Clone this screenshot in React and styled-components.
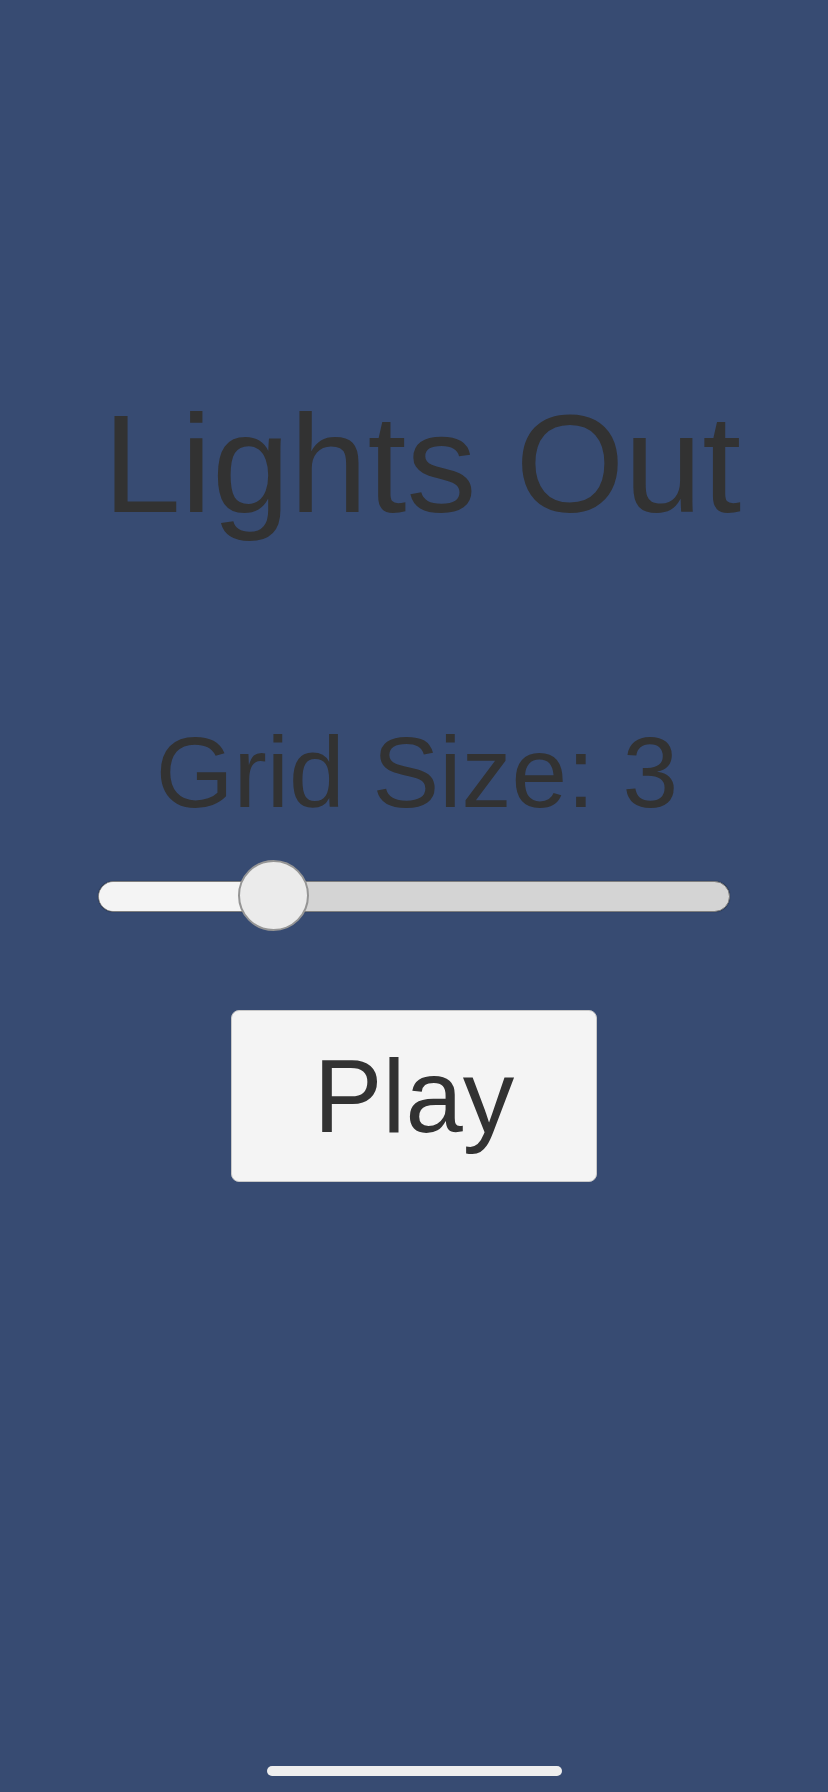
import React from "react";
import styled, { createGlobalStyle } from "styled-components";

const GlobalStyle = createGlobalStyle`
  html, body {
    margin: 0;
    padding: 0;
    background: #374b72;
  }
  * {
    box-sizing: border-box;
  }
`;

const Screen = styled.div`
  width: 828px;
  min-height: 1792px;
  background: #374b72;
  display: flex;
  flex-direction: column;
  align-items: center;
  padding-top: 394px;
  font-family: "Liberation Sans", Arial, sans-serif;
  color: #323232;
`;

const Title = styled.h1`
  margin: 0;
  font-size: 140px;
  line-height: 140px;
  font-weight: 400;
  transform: translateX(8px);
`;

const Label = styled.div`
  margin-top: 188px;
  font-size: 100px;
  line-height: 100px;
  transform: translateX(3px);
`;

const SliderWrap = styled.div`
  margin-top: 39px;
  width: 632px;
  height: 70px;
  display: flex;
  align-items: center;
`;

const Track = styled.div`
  position: relative;
  width: 100%;
  height: 31px;
  border-radius: 16px;
  background: #d4d4d4;
  border: 1px solid #7e7e7e;
  box-shadow: 0 0 1px rgba(0, 0, 0, 0.5);
`;

const Fill = styled.div`
  height: 100%;
  border-radius: 16px 0 0 16px;
  background: #f4f4f4;
`;

const Knob = styled.div`
  position: absolute;
  top: 50%;
  width: 71px;
  height: 71px;
  margin-left: -36px;
  margin-top: -36px;
  border-radius: 50%;
  background: #ebebeb;
  border: 2px solid #959595;
`;

const PlayButton = styled.button`
  margin-top: 79px;
  width: 366px;
  height: 172px;
  border: 1px solid #c8c8c8;
  border-radius: 8px;
  background: #f4f4f4;
  color: #323232;
  font-family: "Liberation Sans", Arial, sans-serif;
  font-size: 103px;
  line-height: 1;
  padding: 0;
  cursor: pointer;
`;

const HomeBar = styled.div`
  margin-top: auto;
  margin-bottom: 16px;
  width: 295px;
  height: 10px;
  border-radius: 5px;
  background: #eeeeee;
`;

const Slider = ({ value, min, max }) => {
  const pct = ((value - min) / (max - min)) * 100;
  return (
    <SliderWrap>
      <Track>
        <Fill style={{ width: `${pct}%` }} />
        <Knob style={{ left: `${pct}%` }} />
      </Track>
    </SliderWrap>
  );
};

const App = () => {
  const size = 3;
  return (
    <>
      <GlobalStyle />
      <Screen>
        <Title>Lights Out</Title>
        <Label>Grid Size: {size}</Label>
        <Slider value={size} min={2} max={5.6} />
        <PlayButton>Play</PlayButton>
        <HomeBar />
      </Screen>
    </>
  );
};

export default App;
